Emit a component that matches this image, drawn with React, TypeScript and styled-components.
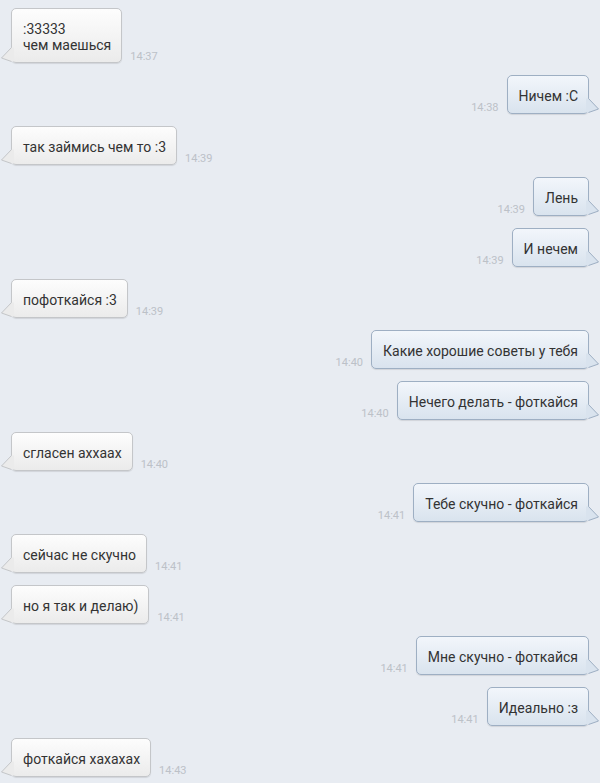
import React from "react";
import styled, { createGlobalStyle, css } from "styled-components";

type Side = "in" | "out";

interface Msg {
  side: Side;
  text: string[];
  time: string;
}

const messages: Msg[] = [
  { side: "in", text: [":33333", "чем маешься"], time: "14:37" },
  { side: "out", text: ["Ничем :С"], time: "14:38" },
  { side: "in", text: ["так займись чем то :3"], time: "14:39" },
  { side: "out", text: ["Лень"], time: "14:39" },
  { side: "out", text: ["И нечем"], time: "14:39" },
  { side: "in", text: ["пофоткайся :3"], time: "14:39" },
  { side: "out", text: ["Какие хорошие советы у тебя"], time: "14:40" },
  { side: "out", text: ["Нечего делать - фоткайся"], time: "14:40" },
  { side: "in", text: ["сгласен аххаах"], time: "14:40" },
  { side: "out", text: ["Тебе скучно - фоткайся"], time: "14:41" },
  { side: "in", text: ["сейчас не скучно"], time: "14:41" },
  { side: "in", text: ["но я так и делаю)"], time: "14:41" },
  { side: "out", text: ["Мне скучно - фоткайся"], time: "14:41" },
  { side: "out", text: ["Идеально :з"], time: "14:41" },
  { side: "in", text: ["фоткайся хахахах"], time: "14:43" },
];

const palette = {
  in: { top: "#fdfdfd", bottom: "#ebebeb", border: "#c4c6c9" },
  out: { top: "#f2f6fb", bottom: "#d9e3ee", border: "#9eafc3" },
};

const GlobalStyle = createGlobalStyle`
  html, body {
    margin: 0;
    padding: 0;
    background: #e8ecf2;
  }
  body {
    font-family: Roboto, "Noto Sans", "Liberation Sans", sans-serif;
  }
`;

const Chat = styled.div`
  display: flex;
  flex-direction: column;
  gap: 12px;
  padding: 8px 11px;
  min-height: 783px;
  box-sizing: border-box;
  background: #e8ecf2;
  overflow: hidden;
`;

const Row = styled.div<{ $side: Side }>`
  display: flex;
  align-items: flex-end;
  flex-direction: ${(p) => (p.$side === "in" ? "row" : "row-reverse")};
`;

const Bubble = styled.div<{ $side: Side }>`
  position: relative;
  padding: 12px 10px 9px 11px;
  border: 1px solid ${(p) => palette[p.$side].border};
  border-radius: 5px;
  background: linear-gradient(
    to bottom,
    ${(p) => palette[p.$side].top},
    ${(p) => palette[p.$side].bottom}
  );
  box-shadow: 0 1px 1px rgba(0, 0, 0, 0.1);
  color: #333333;
  font-size: 14px;
  line-height: 16px;
  white-space: nowrap;
`;

const Line = styled.div``;

const Tail = styled.svg<{ $side: Side }>`
  position: absolute;
  bottom: -1px;
  width: 13px;
  height: 17px;
  overflow: visible;
  ${(p) =>
    p.$side === "in"
      ? css`
          left: -12px;
        `
      : css`
          right: -12px;
          transform: scaleX(-1);
        `}
`;

const Time = styled.span`
  margin: 0 8px;
  padding-bottom: 1px;
  font-size: 11px;
  line-height: 11px;
  color: #bcc1c8;
`;

const BubbleTail: React.FC<{ side: Side }> = ({ side }) => {
  const c = palette[side];
  return (
    <Tail $side={side} viewBox="0 0 13 17">
      <path
        d="M11.5 1.5 L1.5 12 L11.5 15.5 L14 15.5 L14 1.5 Z"
        fill={c.bottom}
      />
      <path
        d="M11.5 1.5 L1.5 12 L11.5 15.5"
        fill="none"
        stroke={c.border}
        strokeWidth="1"
      />
    </Tail>
  );
};

export default function App() {
  return (
    <>
      <GlobalStyle />
      <Chat>
        {messages.map((m, i) => (
          <Row key={i} $side={m.side}>
            <Bubble $side={m.side}>
              {m.text.map((t, j) => (
                <Line key={j}>{t}</Line>
              ))}
              <BubbleTail side={m.side} />
            </Bubble>
            <Time>{m.time}</Time>
          </Row>
        ))}
      </Chat>
    </>
  );
}
